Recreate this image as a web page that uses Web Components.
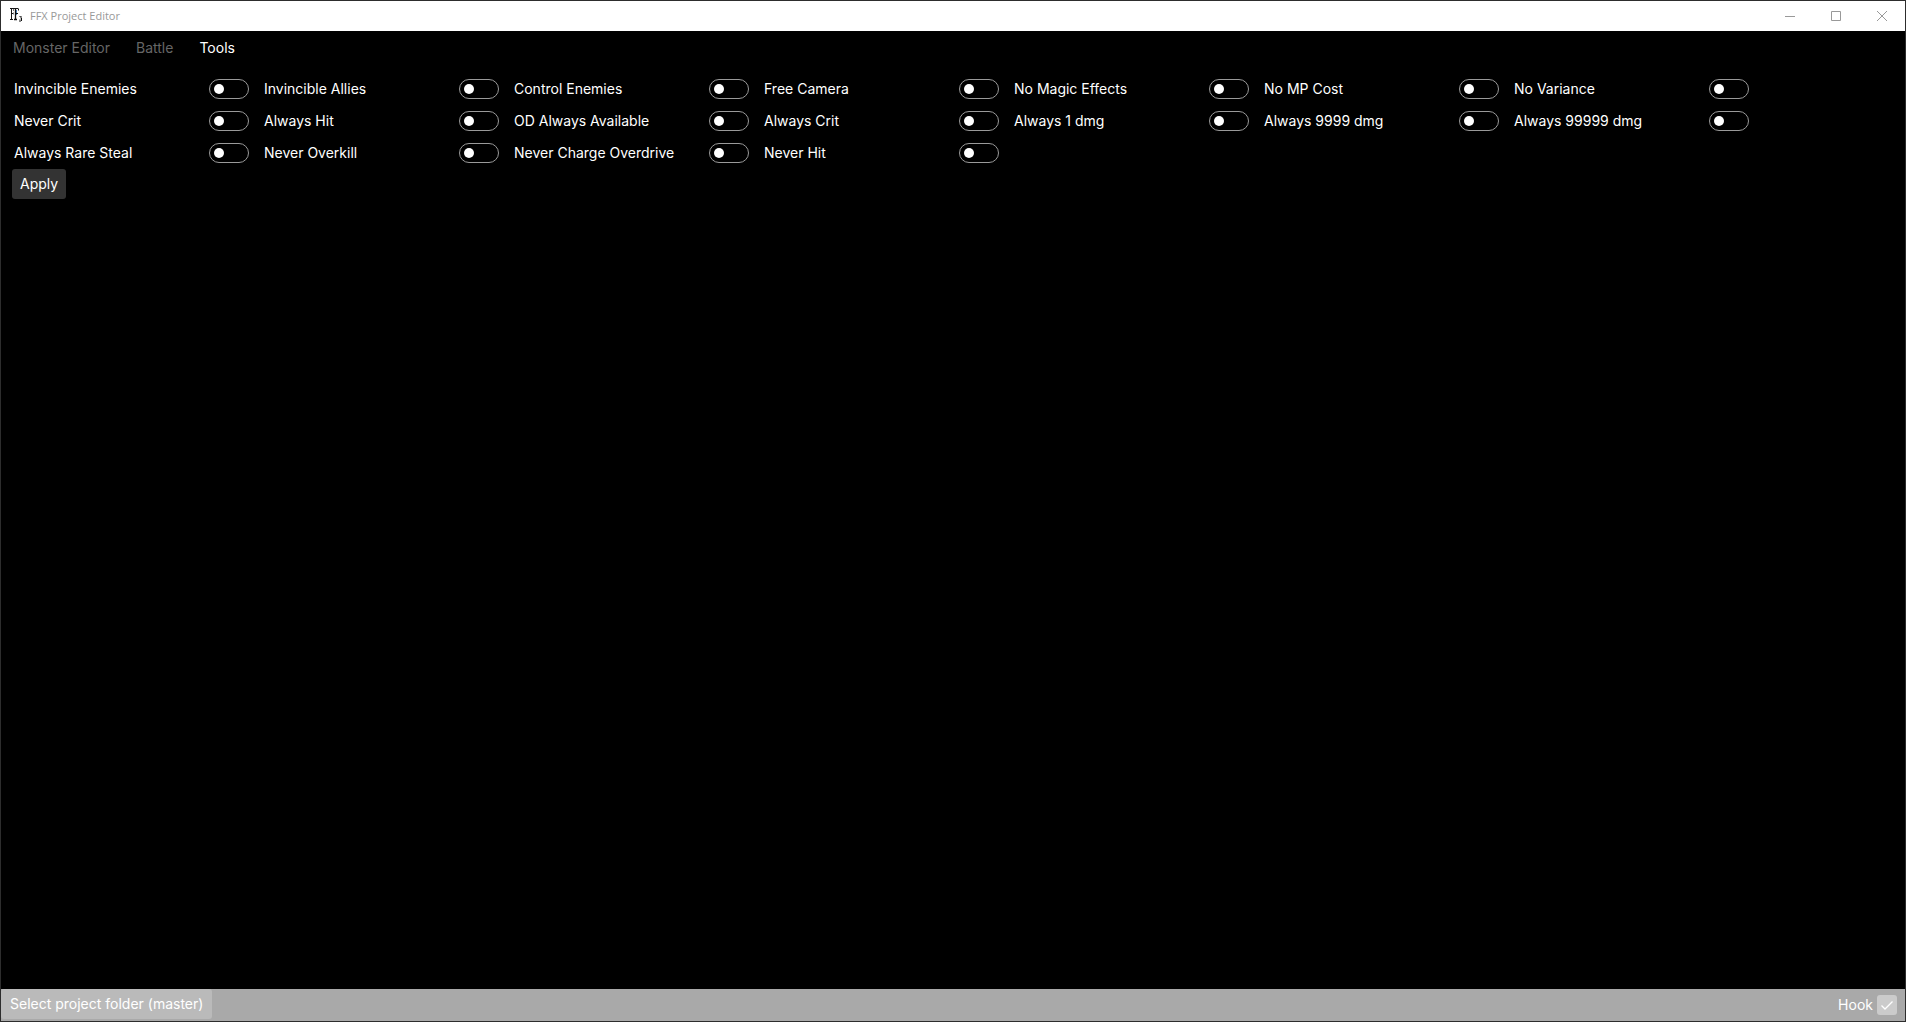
<!DOCTYPE html>
<html lang="en">
<head>
<meta charset="utf-8">
<title>FFX Project Editor</title>
<style>
  html, body { height: 100%; margin: 0; }
  body { background: #000; }
</style>
</head>
<body>
<app-window></app-window>

<template id="app-window">
  <style>
    :host { display: flex; flex-direction: column; box-sizing: border-box; height: 100vh; border: 1px solid #2d2d2d; background: #000; color: #fff; font: 14px/20px Inter, sans-serif; }
    main { flex: 1; min-height: 0; padding: 8px 11px; }
  </style>
  <title-bar>FFX Project Editor</title-bar>
  <tab-strip></tab-strip>
  <main><tools-panel></tools-panel></main>
  <status-bar></status-bar>
</template>

<template id="title-bar">
  <style>
    :host { display: flex; align-items: center; height: 30px; background: #fff; color: #999; font: 11px/16px "Open Sans", sans-serif; }
    .logo { width: 14px; height: 16px; margin: 0 6px 0 9px; }
    .name { flex: 1; }
    button { display: flex; align-items: center; justify-content: center; width: 46px; height: 30px; padding: 0; border: 0; background: none; color: inherit; }
    button svg { width: 10px; height: 10px; fill: none; stroke: currentColor; }
  </style>
  <svg class="logo" viewBox="0 0 14 16" fill="none" aria-hidden="true">
    <path d="M0 .5h8M1.500 1v10.500M0 11.500h3M2 5.500h2" stroke="#161616"/>
    <path d="M3.500 1v2M3.500 4.500v2" stroke="#777"/>
    <path d="M5.500 1v10.500M4 11.500h3" stroke="#111" stroke-width="1.3"/>
    <path d="M6.500 2v5" stroke="#4b7fb3"/>
    <path d="M6 5.500h2M8.500 .500v2" stroke="#111"/>
    <path d="M9.500 8.500h1M11 8v2.500M10 11.500v1.500M11.500 10v3M9.500 13.500h1" stroke="#111"/>
  </svg>
  <span class="name"><slot></slot></span>
  <button aria-label="Minimize"><svg viewBox="0 0 10 10"><path d="M0 5.500h10"/></svg></button>
  <button aria-label="Maximize"><svg viewBox="0 0 10 10"><path d="M.5.5h9v9h-9z"/></svg></button>
  <button aria-label="Close"><svg viewBox="0 0 10 10"><path d="M0 0l10 10M10 0L0 10"/></svg></button>
</template>

<template id="tab-strip">
  <style>
    :host { display: flex; gap: 2px; height: 34px; }
    button { padding: 0 12px; border: 0; background: none; font: inherit; color: #666; }
    button[aria-selected="true"] { color: #fff; }
  </style>
  <button role="tab" aria-selected="false">Monster Editor</button>
  <button role="tab" aria-selected="false">Battle</button>
  <button role="tab" aria-selected="true">Tools</button>
</template>

<template id="toggle-item">
  <style>
    :host { display: block; }
    label { display: flex; align-items: center; justify-content: space-between; height: 32px; padding: 0 13px 0 2px; }
    input { appearance: none; display: flex; align-items: center; box-sizing: border-box; width: 40px; height: 20px; margin: 0; padding: 0 4px; border: 1px solid #9a9a9a; border-radius: 10px; }
    input::before { content: ""; width: 10px; height: 10px; border-radius: 50%; background: #fff; }
    input:checked { justify-content: flex-end; background: #0078d7; }
  </style>
  <label><slot></slot><input type="checkbox" role="switch"></label>
</template>

<template id="tools-panel">
  <style>
    :host { display: block; }
    .grid { display: grid; grid-template-columns: repeat(auto-fill, 250px); }
    button { display: block; height: 30px; padding: 0 8px; border: 0; border-radius: 3px; background: #333; color: #fff; font: inherit; }
  </style>
  <div class="grid"></div>
  <button>Apply</button>
</template>

<template id="status-bar">
  <style>
    :host { display: flex; align-items: center; justify-content: space-between; height: 32px; background: #a9a9a9; }
    button { align-self: flex-start; height: 30px; padding: 0 9px; border: 0; border-radius: 3px; background: #bababa; color: #fff; font: inherit; }
    label { display: flex; align-items: center; gap: 4px; padding-right: 8px; }
    .box { display: grid; }
    .box > * { grid-area: 1 / 1; }
    input { appearance: none; width: 20px; height: 20px; margin: 0; border-radius: 3px; background: #cbcbcb; }
    svg { width: 20px; height: 20px; fill: none; stroke: #fff; stroke-width: 1.3; pointer-events: none; }
    input:not(:checked) + svg { visibility: hidden; }
  </style>
  <button>Select project folder (master)</button>
  <label>Hook
    <span class="box"><input type="checkbox" checked><svg viewBox="0 0 20 20" aria-hidden="true"><path d="M4.500 10.500l3.500 3.500 7.500-7.500"/></svg></span>
  </label>
</template>

<script>
  class TemplateElement extends HTMLElement {
    constructor() {
      super();
      const template = document.getElementById(this.localName);
      this.attachShadow({ mode: "open" }).append(template.content.cloneNode(true));
    }
  }

  class ToolsPanel extends TemplateElement {
    constructor() {
      super();
      const names = [
        "Invincible Enemies", "Invincible Allies", "Control Enemies", "Free Camera", "No Magic Effects", "No MP Cost", "No Variance",
        "Never Crit", "Always Hit", "OD Always Available", "Always Crit", "Always 1 dmg", "Always 9999 dmg", "Always 99999 dmg",
        "Always Rare Steal", "Never Overkill", "Never Charge Overdrive", "Never Hit"
      ];
      const grid = this.shadowRoot.querySelector(".grid");
      for (const name of names) {
        const item = document.createElement("toggle-item");
        item.textContent = name;
        grid.append(item);
      }
    }
  }

  customElements.define("toggle-item", class extends TemplateElement {});
  customElements.define("title-bar", class extends TemplateElement {});
  customElements.define("tab-strip", class extends TemplateElement {});
  customElements.define("status-bar", class extends TemplateElement {});
  customElements.define("tools-panel", ToolsPanel);
  customElements.define("app-window", class extends TemplateElement {});
</script>
</body>
</html>
